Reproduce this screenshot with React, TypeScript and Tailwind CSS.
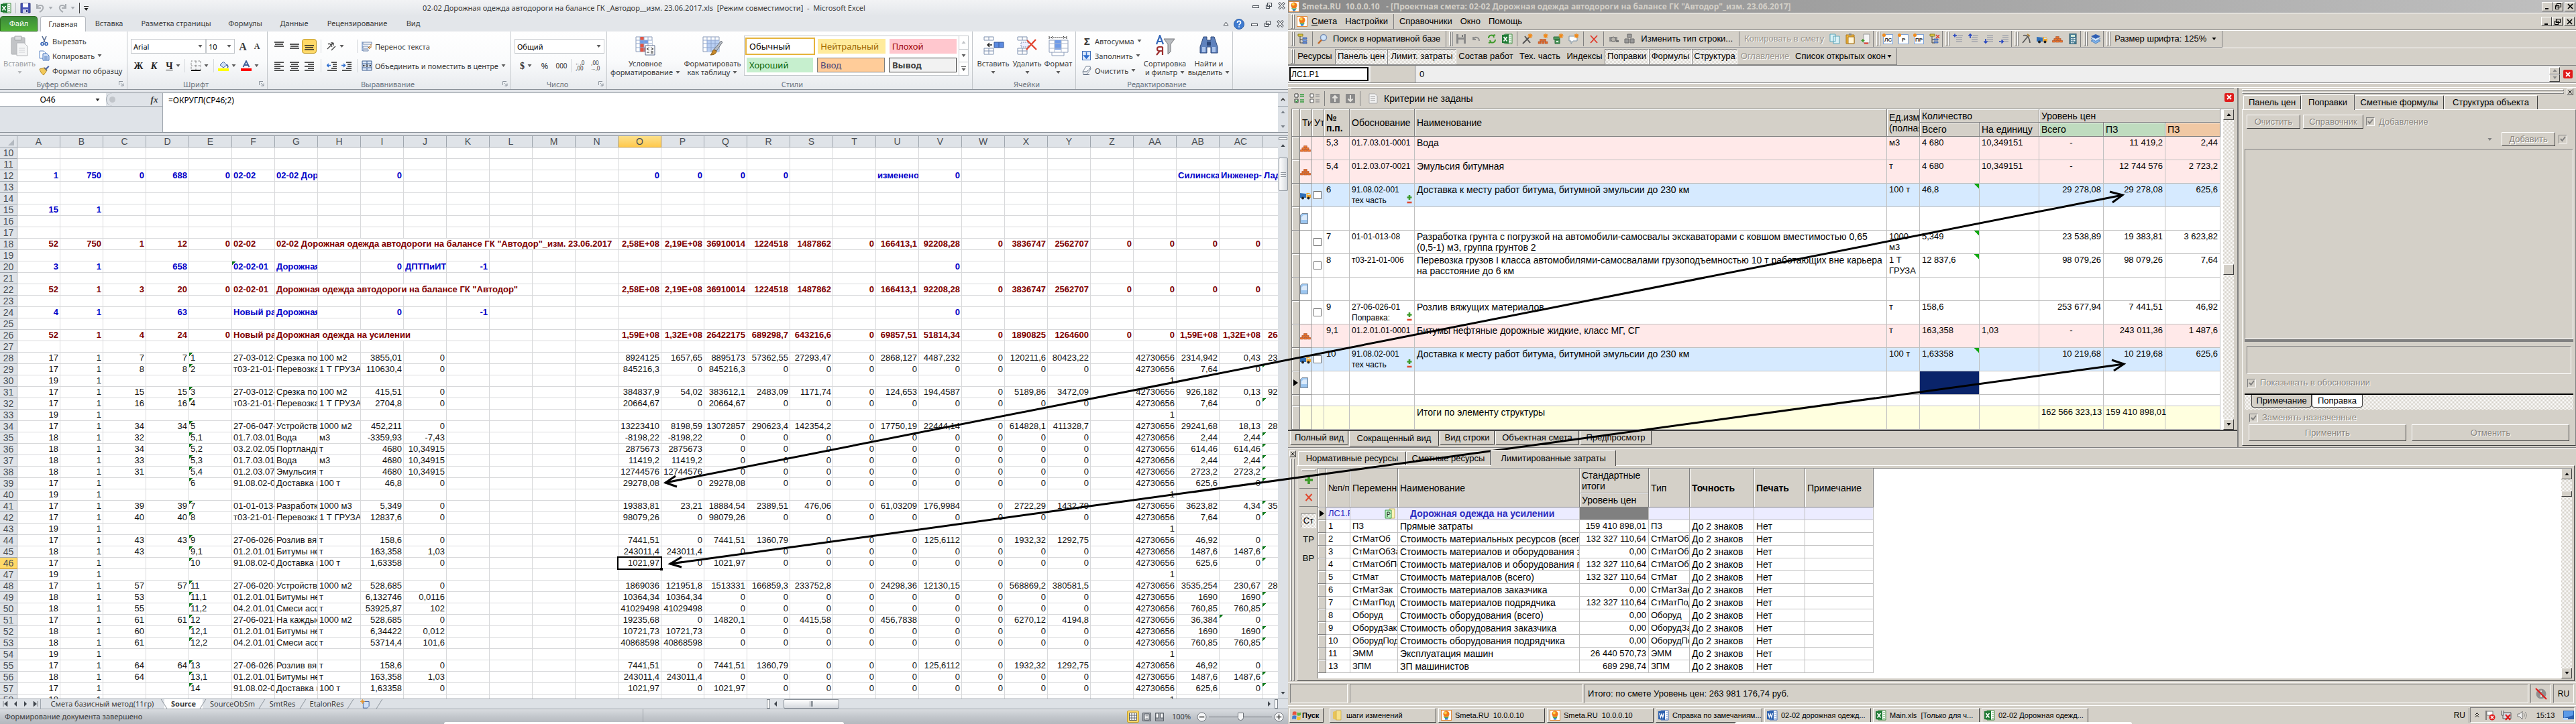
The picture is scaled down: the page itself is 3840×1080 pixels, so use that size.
import React from "react";

type Kids = { children?: React.ReactNode };

/* ---------- shared bits ---------- */

const RAISED = "border border-t-white border-l-white border-r-[#404040] border-b-[#404040] bg-[#d4d0c8]";
const SUNKEN = "border border-t-[#808080] border-l-[#808080] border-r-white border-b-white";
const DITHER = "bg-[repeating-conic-gradient(#ffffff_0_25%,#d4d0c8_0_50%)] bg-[length:2px_2px]";

function Ico({ s = 16, vb = 16, children }: Kids & { s?: number; vb?: number }) {
  return (
    <svg width={s} height={s} viewBox={`0 0 ${vb} ${vb}`} className="shrink-0" aria-hidden="true">
      {children}
    </svg>
  );
}

function Down({ c = "#5b5b5b" }: { c?: string }) {
  return (
    <svg width="7" height="4" viewBox="0 0 7 4" className="shrink-0" aria-hidden="true">
      <path d="M0.5 0h6l-3 4z" fill={c} />
    </svg>
  );
}

function Up({ c = "#5b5b5b" }: { c?: string }) {
  return (
    <svg width="7" height="4" viewBox="0 0 7 4" className="shrink-0" aria-hidden="true">
      <path d="M0.5 4h6l-3-4z" fill={c} />
    </svg>
  );
}

function ExcelLogo() {
  return (
    <Ico>
      <path d="M4 1h11v14H4z" fill="#fff" stroke="#3c8a3c" />
      <path d="M11 4h3M11 7h3M11 10h3M11 13h3" stroke="#5aa65a" />
      <path d="M0 2l10-1v14L0 14z" fill="#1f7a34" />
      <path d="M2.5 5l5 6.5M7.5 5l-5 6.5" stroke="#fff" strokeWidth="1.7" />
    </Ico>
  );
}

function WordLogo() {
  return (
    <Ico>
      <path d="M4 1h11v14H4z" fill="#fff" stroke="#4a73b8" />
      <path d="M11 4h3M11 7h3M11 10h3M11 13h3" stroke="#6b93cf" />
      <path d="M0 2l10-1v14L0 14z" fill="#2a5fae" />
      <path d="M1.8 5l1.6 6 1.7-5 1.7 5 1.5-6" stroke="#fff" strokeWidth="1.3" fill="none" />
    </Ico>
  );
}

function SmetaLogo() {
  return (
    <Ico>
      <rect x="0.5" y="0.5" width="15" height="15" fill="#fff" stroke="#e08a3a" />
      <circle cx="8" cy="6" r="4.6" fill="#f07a1a" />
      <circle cx="6.8" cy="4.6" r="2" fill="#ffd34a" />
      <path d="M3 8.5c2 2.4 6 3 9 1l-1.5 3.2H6z" fill="#4aa44a" />
      <rect x="6" y="12" width="4" height="2.6" fill="#3b82d0" />
    </Ico>
  );
}

/* ---------- Excel: ribbon ---------- */

function Group({ w, label, launcher, children }: Kids & { w: string; label: string; launcher?: boolean }) {
  return (
    <section className={`${w} flex shrink-0 flex-col border-r border-[#c3c7cb]`}>
      <div className="flex flex-1">{children}</div>
      <div className="flex h-4 items-center text-[#6a7480]">
        <span className="flex-1 pl-2 text-center">{label}</span>
        {launcher ? (
          <button className="mr-1 p-0" aria-label={label}>
            <Ico s={8} vb={8}>
              <path d="M0.5 6V.5H6M3 3l3.5 3.5M7 3.5V7H3.5" stroke="#8b939c" fill="none" />
            </Ico>
          </button>
        ) : null}
      </div>
    </section>
  );
}

function Small({ icon, children, arrow }: Kids & { icon: React.ReactNode; arrow?: boolean }) {
  return (
    <button className="flex h-[22px] items-center gap-1 whitespace-nowrap text-left">
      {icon}
      <span>{children}</span>
      {arrow ? <Down /> : null}
    </button>
  );
}

function Big({ w, icon, l1, l2, dim }: { w: string; icon: React.ReactNode; l1: string; l2?: string; dim?: boolean }) {
  return (
    <button className={`${w} ${dim ? "text-[#9a9da1]" : ""} flex shrink-0 flex-col items-center pt-[5px] leading-[13px]`}>
      {icon}
      <span className="mt-1 whitespace-nowrap">{l1}</span>
      <span className="flex h-[13px] items-center gap-1 whitespace-nowrap">
        {l2}
        <Down c={dim ? "#b5b7ba" : "#5b5b5b"} />
      </span>
    </button>
  );
}

function Sep() {
  return <i className="h-5 w-px shrink-0 bg-[#d5d8dc]" />;
}

function Lines({ d }: { d: string }) {
  return (
    <Ico>
      <path d={d} stroke="#222" strokeWidth="1.3" />
    </Ico>
  );
}

function IB({ w, children, on, label }: Kids & { w: string; on?: boolean; label: string }) {
  return (
    <button
      aria-label={label}
      className={`${w} ${on ? "rounded-sm border border-[#c29b29] bg-[#ffd968]" : ""} flex h-[22px] shrink-0 items-center justify-center gap-1`}
    >
      {children}
    </button>
  );
}

function Combo({ w, value, label }: { w: string; value: string; label: string }) {
  return (
    <span className={`${w} relative flex h-[22px] shrink-0 items-center border border-[#c4c8cc] bg-white`}>
      <select aria-label={label} className="h-full w-full appearance-none bg-transparent pl-[3px] text-[11px] text-black">
        <option>{value}</option>
      </select>
      <span className="pointer-events-none absolute right-1">
        <Down />
      </span>
    </span>
  );
}

function TableIcon({ brush, red }: { brush?: boolean; red?: boolean }) {
  return (
    <Ico s={32} vb={32}>
      <path d="M2 3h24v22H2z" fill="#fff" stroke="#8a9bb8" />
      <path d="M8 8h18v17H8z" fill={red ? "#fff" : "#b9cff3"} />
      {red ? <path d="M8 3h6v5H8zM8 19h9v6H8z" fill="#e8543f" /> : null}
      {red ? <path d="M8 8h12v5H8z" fill="#6f9be8" /> : null}
      {red ? <path d="M8 13h6v6H8z" fill="#e8543f" /> : null}
      <path d="M8 3v22M14 3v22M20 3v22M2 8h24M2 13h24M2 19h24" stroke="#8fa6cf" fill="none" />
      {brush ? (
        <>
          <path d="M29 9l2 2-9 13-4-2z" fill="#b7bcc4" stroke="#6b7077" />
          <path d="M18 22l4 2c0 4-4 6-9 6 3-2 2-6 5-8z" fill="#c98a2b" stroke="#7a5212" />
        </>
      ) : (
        <>
          <path d="M16 16h14v14H16z" fill="#fff" stroke="#5b6b8a" />
          <path d="M22 19l-4 2 4 2M18 26h4M24 19l4 2-4 2M24 25h4M24 27h4" stroke="#222" fill="none" />
        </>
      )}
    </Ico>
  );
}

function CellsIcon({ kind }: { kind: "ins" | "del" | "fmt" }) {
  if (kind === "fmt")
    return (
      <Ico s={32} vb={32}>
        <path d="M2 2v4M2 4h26M28 2v4M7 2l-2 2 2 2M23 2l2 2-2 2" stroke="#333" fill="none" strokeDasharray="2 1" />
        <path d="M2 8h28v18H2zM6 26v5h18v-5" fill="#fff" stroke="#8a9bb8" />
        <path d="M10 8h10v14H10z" fill="#6f9be8" />
        <path d="M10 8v18M20 8v18M2 13h28M2 20h28" stroke="#a9b6cc" fill="none" />
      </Ico>
    );
  return (
    <Ico s={32} vb={32}>
      <path d="M2 3h14v5H2zM2 20h14v9H2zM9 3v5M9 20v9M2 24h14" fill="#fff" stroke="#7d8fae" />
      {kind === "ins" ? (
        <>
          <path d="M17 11h14v8H17z" fill="#5b8ae0" stroke="#34599c" />
          <path d="M24 11v8" stroke="#34599c" />
          <path d="M14 15H8M10 12l-3 3 3 3" stroke="#222" fill="none" strokeWidth="1.4" />
        </>
      ) : (
        <>
          <path d="M7 11h11v7H7z" fill="#eef" stroke="#7d8fae" strokeDasharray="2 1" />
          <path d="M16 8l14 14M29 7L15 22" stroke="#e2442f" strokeWidth="2.4" />
        </>
      )}
    </Ico>
  );
}

function StyleItem({ cls, children }: Kids & { cls: string }) {
  return <button className={`${cls} flex h-[22px] flex-1 items-center overflow-hidden pl-1 text-[13px]`}>{children}</button>;
}

function Ribbon() {
  return (
    <div className="flex h-[87px] shrink-0 overflow-hidden border-b border-[#8a9199] bg-linear-to-b from-white via-[#fafbfc] to-[#e7eaee] text-[11px] leading-[13px] text-[#3b3b3b]">
      <Group w="w-[190px]" label="Буфер обмена" launcher>
        <Big
          w="w-[58px]"
          dim
          l1="Вставить"
          icon={
            <Ico s={32} vb={32}>
              <rect x="4" y="4" width="20" height="25" rx="1" fill="#c2c4c7" stroke="#aeb0b3" />
              <path d="M9 2h10v6H9z" fill="#dcdde0" stroke="#a5a7aa" />
              <path d="M12 12h11l5 5v14H12z" fill="#f4f5f6" stroke="#b5b7ba" />
              <path d="M15 20h9M15 23h9M15 26h9" stroke="#d0d2d5" />
            </Ico>
          }
        />
        <div className="flex flex-col pt-[3px]">
          <Small
            icon={
              <Ico>
                <path d="M5 1l4 9M11 1L7 10" stroke="#5a6f94" strokeWidth="1.6" />
                <circle cx="5" cy="12.5" r="2" fill="none" stroke="#2f5fb3" strokeWidth="1.5" />
                <circle cx="11" cy="12.5" r="2" fill="none" stroke="#2f5fb3" strokeWidth="1.5" />
              </Ico>
            }
          >
            Вырезать
          </Small>
          <Small
            arrow
            icon={
              <Ico>
                <path d="M1 1h6l3 3v8H1z" fill="#fff" stroke="#5b84c4" />
                <path d="M6 5h6l3 3v7H6z" fill="#dbe8fb" stroke="#3f6fb8" />
                <path d="M8 9h5M8 11h5M8 13h5" stroke="#3f6fb8" />
              </Ico>
            }
          >
            Копировать
          </Small>
          <Small
            icon={
              <Ico>
                <path d="M10 5l4-4 1.5 1.5-4 4z" fill="#4a64a8" />
                <path d="M1 6l7-2 4 4-5 7C4 13 2 10 1 6z" fill="#f2c95a" stroke="#b78a26" />
                <path d="M8 4l4 4" stroke="#6b7077" strokeWidth="2" />
              </Ico>
            }
          >
            Формат по образцу
          </Small>
        </div>
      </Group>

      <Group w="w-[209px]" label="Шрифт" launcher>
        <div className="flex flex-col gap-[7px] pt-[11px] pl-[5px]">
          <div className="flex items-center">
            <Combo w="w-[112px]" value="Arial" label="Шрифт" />
            <Combo w="w-[43px]" value="10" label="Размер" />
            <IB w="w-[24px]" label="Увеличить размер">
              <b className="font-['Liberation_Serif'] text-[16px]">A</b>
            </IB>
            <IB w="w-[18px]" label="Уменьшить размер">
              <b className="font-['Liberation_Serif'] text-[12px]">A</b>
            </IB>
          </div>
          <div className="flex items-center font-['Liberation_Serif'] text-[14px] font-bold text-[#222]">
            <IB w="w-[23px]" label="Полужирный">Ж</IB>
            <IB w="w-[23px]" label="Курсив"><em>К</em></IB>
            <IB w="w-[34px]" label="Подчеркнутый"><u>Ч</u><Down /></IB>
            <Sep />
            <IB w="w-[42px]" label="Границы">
              <Ico>
                <path d="M1 1h14v14H1zM8 1v14M1 8h14" stroke="#777" strokeDasharray="1 1" fill="none" />
                <path d="M1 15h14" stroke="#111" strokeWidth="2" />
              </Ico>
              <Down />
            </IB>
            <Sep />
            <IB w="w-[38px]" label="Цвет заливки">
              <Ico>
                <path d="M3 7l5-5 5 5-5 4z" fill="#cfe0f8" stroke="#3f5f9a" />
                <path d="M13 6c2 2 2 4 1 5" stroke="#3f5f9a" fill="none" strokeWidth="1.6" />
                <path d="M0 12h16v4H0z" fill="#ffff00" />
              </Ico>
              <Down />
            </IB>
            <IB w="w-[30px]" label="Цвет текста">
              <Ico>
                <path d="M3.5 10L8 1l4.5 9M5 7h6" stroke="#3f5f9a" strokeWidth="1.8" fill="none" />
                <path d="M0 12h16v4H0z" fill="#ff0000" />
              </Ico>
              <Down />
            </IB>
          </div>
        </div>
      </Group>

      <Group w="w-[363px]" label="Выравнивание" launcher>
        <div className="flex flex-col gap-[7px] pt-[11px] pl-[5px]">
          <div className="flex items-center">
            <IB w="w-[23px]" label="По верхнему краю"><Lines d="M1 2h14M2 5h12M1 8h14" /></IB>
            <IB w="w-[23px]" label="По середине"><Lines d="M1 5h14M2 8h12M1 11h14" /></IB>
            <IB w="w-[22px]" on label="По нижнему краю"><Lines d="M1 7h14M2 10h12M1 13h14" /></IB>
            <span className="w-[6px]" />
            <Sep />
            <IB w="w-[40px]" label="Ориентация">
              <Ico>
                <path d="M2 12L11 3M11 3v4M11 3H7M3 5c2-2 4 0 6 4M8 14l6-6" stroke="#444" fill="none" strokeWidth="1.3" />
              </Ico>
              <Down />
            </IB>
            <span className="w-[13px]" />
            <Sep />
            <span className="w-[6px]" />
            <Small
              icon={
                <Ico>
                  <path d="M1 1v14" stroke="#3f6fb8" />
                  <path d="M2 2h13v3H2zM2 8h8v3H2zM2 13h8v2H2z" fill="#fff" stroke="#6b83ab" />
                  <path d="M14 5v5h-3M12 8l-2 2 2 2" stroke="#b06a1a" fill="none" />
                </Ico>
              }
            >
              Перенос текста
            </Small>
          </div>
          <div className="flex items-center">
            <IB w="w-[23px]" label="По левому краю"><Lines d="M1 3h14M1 6h9M1 9h14M1 12h9M1 15h14" /></IB>
            <IB w="w-[23px]" label="По центру"><Lines d="M1 3h14M3 6h10M1 9h14M3 12h10M1 15h14" /></IB>
            <IB w="w-[22px]" label="По правому краю"><Lines d="M1 3h14M6 6h9M1 9h14M6 12h9M1 15h14" /></IB>
            <span className="w-[6px]" />
            <Sep />
            <span className="w-[5px]" />
            <IB w="w-[22px]" label="Уменьшить отступ">
              <Ico>
                <path d="M7 3h8M9 6h6M9 9h6M7 12h8M1 15h14" stroke="#222" strokeWidth="1.3" />
                <path d="M6 7.5H1M3 5L0.5 7.5 3 10" stroke="#2f6fd0" fill="none" strokeWidth="1.5" />
              </Ico>
            </IB>
            <IB w="w-[22px]" label="Увеличить отступ">
              <Ico>
                <path d="M7 3h8M9 6h6M9 9h6M7 12h8M1 15h14" stroke="#222" strokeWidth="1.3" />
                <path d="M0 7.5h5M3 5l2.5 2.5L3 10" stroke="#2f6fd0" fill="none" strokeWidth="1.5" />
              </Ico>
            </IB>
            <span className="w-[4px]" />
            <Sep />
            <span className="w-[6px]" />
            <Small
              arrow
              icon={
                <Ico>
                  <path d="M1 1h14v14H1zM8 1v4M8 11v4M1 5h14M1 11h14" fill="#dbe8fb" stroke="#3f5f8f" />
                  <path d="M5 8H2M11 8h3M3.5 6.5L2 8l1.5 1.5M12.5 6.5L14 8l-1.5 1.5" stroke="#222" fill="none" />
                  <circle cx="8" cy="8" r="1.4" fill="none" stroke="#222" />
                </Ico>
              }
            >
              Объединить и поместить в центре
            </Small>
          </div>
        </div>
      </Group>

      <Group w="w-[143px]" label="Число" launcher>
        <div className="flex flex-col gap-[7px] pt-[11px] pl-[5px]">
          <Combo w="w-[134px]" value="Общий" label="Формат числа" />
          <div className="flex items-center text-[#333]">
            <IB w="w-[34px]" label="Финансовый"><b className="font-['Liberation_Serif'] text-[14px]">$</b><Down /></IB>
            <IB w="w-[22px]" label="Процентный"><span className="text-[13px]">%</span></IB>
            <IB w="w-[28px]" label="Формат с разделителями"><span className="text-[10px]">000</span></IB>
            <Sep />
            <IB w="w-[24px]" label="Увеличить разрядность">
              <span className="text-[8px] leading-[8px]">←,0<br />,00</span>
            </IB>
            <IB w="w-[22px]" label="Уменьшить разрядность">
              <span className="text-[8px] leading-[8px]">,00<br />→,0</span>
            </IB>
          </div>
        </div>
      </Group>

      <Group w="w-[545px]" label="Стили">
        <Big w="w-[114px]" icon={<TableIcon red />} l1="Условное" l2="форматирование" />
        <Big w="w-[86px]" icon={<TableIcon brush />} l1="Форматировать" l2="как таблицу" />
        <div className="mt-[6px] ml-1 flex h-[60px] w-[335px] border border-[#c4c8cc] bg-white">
          <div className="flex flex-1 flex-col justify-between px-[3px] pt-1 pb-1">
            <div className="flex gap-[6px]">
              <StyleItem cls="bg-white text-black outline-2 outline-[#e5b33b]">Обычный</StyleItem>
              <StyleItem cls="bg-[#ffeb9c] text-[#9c6500]">Нейтральный</StyleItem>
              <StyleItem cls="bg-[#ffc7ce] text-[#9c0006]">Плохой</StyleItem>
            </div>
            <div className="flex gap-[6px]">
              <StyleItem cls="bg-[#c6efce] text-[#006100]">Хороший</StyleItem>
              <StyleItem cls="border border-[#7f7f7f] bg-[#ffcc99] text-[#3f3f76]">Ввод</StyleItem>
              <StyleItem cls="border border-[#3f3f3f] bg-[#f2f2f2] font-bold text-[#3f3f3f]">Вывод</StyleItem>
            </div>
          </div>
          <div className="flex w-[14px] flex-col divide-y divide-[#c4c8cc] border-l border-[#c4c8cc]">
            <button aria-label="Вверх" className="flex flex-1 items-center justify-center"><Up c="#c0c3c6" /></button>
            <button aria-label="Вниз" className="flex flex-1 items-center justify-center"><Down /></button>
            <button aria-label="Дополнительно" className="flex flex-1 flex-col items-center justify-center gap-0.5">
              <i className="h-px w-[7px] bg-[#5b5b5b]" />
              <Down />
            </button>
          </div>
        </div>
      </Group>

      <Group w="w-[154px]" label="Ячейки">
        <span className="w-1" />
        <Big w="w-[53px]" icon={<CellsIcon kind="ins" />} l1="Вставить" />
        <Big w="w-[48px]" icon={<CellsIcon kind="del" />} l1="Удалить" />
        <Big w="w-[45px]" icon={<CellsIcon kind="fmt" />} l1="Формат" />
      </Group>

      <Group w="w-[234px]" label="Редактирование">
        <div className="flex w-[98px] flex-col pt-[3px] pl-2">
          <Small arrow icon={<b className="w-4 pl-1 text-[15px]">Σ</b>}>Автосумма</Small>
          <Small
            arrow
            icon={
              <Ico>
                <rect x="1.5" y="1.5" width="12" height="13" fill="#dbe8fb" stroke="#3f6fb8" />
                <path d="M7.5 3v7M4 8l3.5 4L11 8z" stroke="#2f6fd0" fill="#2f6fd0" strokeWidth="1.5" />
              </Ico>
            }
          >
            Заполнить
          </Small>
          <Small
            arrow
            icon={
              <Ico>
                <path d="M7 2h6l1 4-6 8H3l-1-4z" fill="#f5f7fa" stroke="#7b8797" />
                <path d="M2 10h6l6-6M3 14.5h9" stroke="#4c5a70" fill="none" />
              </Ico>
            }
          >
            Очистить
          </Small>
        </div>
        <Big
          w="w-[69px]"
          l1="Сортировка"
          l2="и фильтр"
          icon={
            <Ico s={32} vb={32}>
              <path d="M3 14L8 1l5 13M5 10h6" stroke="#3567b8" strokeWidth="2.2" fill="none" />
              <path d="M12 18v12M12 18H7c-4 0-4 6 0 6h5M8 24l-5 6" stroke="#9c2f2f" strokeWidth="2.2" fill="none" />
              <path d="M14 6h16l-6 8v11l-4 4V14z" fill="#b9bcc0" stroke="#77797c" />
            </Ico>
          }
        />
        <Big
          w="w-[62px]"
          l1="Найти и"
          l2="выделить"
          icon={
            <Ico s={32} vb={32}>
              <path d="M8 3h5v5h6V3h5l5 15v9h-10v-9h-6v9H3v-9z" fill="#5f82bd" stroke="#2c4778" />
              <path d="M6 18h5v8H6zM21 18h5v8h-5z" fill="#a9c2ea" />
              <path d="M13 10h6v6h-6z" fill="#2c4778" />
            </Ico>
          }
        />
      </Group>
    </div>
  );
}

/* ---------- Excel: sheet ---------- */

const LETTERS = "A B C D E F G H I J K L M N O P Q R S T U V W X Y Z AA AB AC".split(" ");
const ZERO = "0|0|0|0|0|0|0|0|0|";

/* "^" marks a cell with the green error corner, "~n~" a text that runs over n columns,
   "<" a number whose right part lies beyond the window's edge */
const SHEET: Record<number, string> = {
  12: "1|750|0|688|0|02-02|02-02 Дорожная||0||||||0|0|0|0|||изменено|0||||||Силинская|Инженер-|Лад",
  15: "15|1",
  18: '52|750|1|12|0|02-02|~8~02-02 Дорожная одежда автодороги на балансе ГК "Автодор"_изм. 23.06.2017|2,58E+08|2,19E+08|36910014|1224518|1487862|0|166413,1|92208,28|0|3836747|2562707|0|0|0|0',
  20: "3|1||658||^02-02-01|Дорожная||0|ДПТПиИТ|-1|||||||||||0",
  22: '52|1|3|20|0|02-02-01|~6~Дорожная одежда автодороги на балансе ГК "Автодор"|||2,58E+08|2,19E+08|36910014|1224518|1487862|0|166413,1|92208,28|0|3836747|2562707|0|0|0|0',
  24: "4|1||63||Новый раздел|Дорожная||0||-1|||||||||||0",
  26: "52|1|4|24|0|Новый раздел|~4~Дорожная одежда на усилении|||||1,59E+08|1,32E+08|26422175|689298,7|643216,6|0|69857,51|51814,34|0|1890825|1264600|0|0|1,59E+08|1,32E+08|<264",
  28: "17|1|7|7|^1|27-03-012-|Срезка по|100 м2|3855,01|0|||||8924125|1657,65|8895173|57362,55|27293,47|0|2868,127|4487,232|0|120211,6|80423,22||42730656|2314,942|0,43|<23",
  29: "17|1|8|8|^2|т03-21-01-0|Перевозка|1 Т ГРУЗА|110630,4|0|||||845216,3|0|845216,3|0|0|0|0|0|0|0|0||42730656|7,64|0|^",
  30: "19|1|||||||||||||||||||||||||1",
  31: "17|1|15|15|^3|27-03-012-|Срезка по|100 м2|415,51|0|||||384837,9|54,02|383612,1|2483,09|1171,74|0|124,653|194,4587|0|5189,86|3472,09||42730656|926,182|0,13|<92",
  32: "17|1|16|16|^4|т03-21-01-0|Перевозка|1 Т ГРУЗА|2704,8|0|||||20664,67|0|20664,67|0|0|0|0|0|0|0|0||42730656|7,64|0|^",
  33: "19|1|||||||||||||||||||||||||1",
  34: "17|1|34|34|^5|27-06-047-|Устройств|1000 м2|452,211|0|||||13223410|8198,59|13072857|290623,4|142354,2|0|17750,19|22444,14|0|614828,1|411328,7||42730656|29241,68|18,13|<289",
  35: `18|1|32||^5,1|01.7.03.01|Вода|м3|-3359,93|-7,43|||||-8198,22|-8198,22|${ZERO}|42730656|2,44|2,44|^`,
  36: `18|1|34||^5,2|03.2.02.05|Портландц|т|4680|10,34915|||||2875673|2875673|${ZERO}|42730656|614,46|614,46|^`,
  37: `18|1|33||^5,3|01.7.03.01|Вода|м3|4680|10,34915|||||11419,2|11419,2|${ZERO}|42730656|2,44|2,44|^`,
  38: `18|1|31||^5,4|01.2.03.07|Эмульсия|т|4680|10,34915|||||12744576|12744576|${ZERO}|42730656|2723,2|2723,2|^`,
  39: "17|1|||^6|91.08.02-0|Доставка к|100 т|46,8|0|||||29278,08|0|29278,08|0|0|0|0|0|0|0|0||42730656|625,6|0|^",
  40: "19|1|||||||||||||||||||||||||1",
  41: "17|1|39|39|^7|01-01-013-|Разработк|1000 м3|5,349|0|||||19383,81|23,21|18884,54|2389,51|476,06|0|61,03209|176,9984|0|2722,29|1432,79||42730656|3623,82|4,34|^<35",
  42: "17|1|40|40|^8|т03-21-01-0|Перевозка|1 Т ГРУЗА|12837,6|0|||||98079,26|0|98079,26|0|0|0|0|0|0|0|0||42730656|7,64|0|^",
  43: "19|1|||||||||||||||||||||||||1",
  44: "17|1|43|43|^9|27-06-026-|Розлив вя|т|158,6|0|||||7441,51|0|7441,51|1360,79|0|0|0|125,6112|0|1932,32|1292,75||42730656|46,92|0|",
  45: `18|1|43||^9,1|01.2.01.01|Битумы не|т|163,358|1,03|||||243011,4|243011,4|${ZERO}|42730656|1487,6|1487,6|^`,
  46: "17|1|||^10|91.08.02-0|Доставка к|100 т|1,63358|0|||||1021,97|0|1021,97|0|0|0|0|0|0|0|0||42730656|625,6|0|^",
  47: "19|1|||||||||||||||||||||||||1",
  48: "17|1|57|57|^11|27-06-020-|Устройств|1000 м2|528,685|0|||||1869036|121951,8|1513331|166859,3|233752,8|0|24298,36|12130,15|0|568869,2|380581,5||42730656|3535,254|230,67|<280",
  49: `18|1|53||^11,1|01.2.01.01|Битумы не|т|6,132746|0,0116|||||10364,34|10364,34|${ZERO}|42730656|1690|1690|^`,
  50: `18|1|55||^11,2|04.2.01.01|Смеси асф|т|53925,87|102|||||41029498|41029498|${ZERO}|42730656|760,85|760,85|^`,
  51: "17|1|61|61|^12|27-06-021-|На каждые|1000 м2|528,685|0|||||19235,68|0|14820,1|0|4415,58|0|456,7838|0|0|6270,12|4194,8||42730656|36,384|^0|",
  52: `18|1|60||^12,1|01.2.01.01|Битумы не|т|6,34422|0,012|||||10721,73|10721,73|${ZERO}|42730656|1690|1690|^`,
  53: `18|1|61||^12,2|04.2.01.01|Смеси асф|т|53714,4|101,6|||||40868598|40868598|${ZERO}|42730656|760,85|760,85|^`,
  54: "19|1|||||||||||||||||||||||||1",
  55: "17|1|64|64|^13|27-06-026-|Розлив вя|т|158,6|0|||||7441,51|0|7441,51|1360,79|0|0|0|125,6112|0|1932,32|1292,75||42730656|46,92|0|",
  56: `18|1|64||^13,1|01.2.01.01|Битумы не|т|163,358|1,03|||||243011,4|243011,4|${ZERO}|42730656|1487,6|1487,6|^`,
  57: "17|1|||^14|91.08.02-0|Доставка к|100 т|1,63358|0|||||1021,97|0|1021,97|0|0|0|0|0|0|0|0||42730656|625,6|0|^",
  58: "18|1|||||||||||||||||||||||||1",
};

const BLUE = [12, 15, 20, 24];
const RED = [18, 22, 26];
const ROWS = Array.from({ length: 49 }, (_, i) => i + 10);

function SheetRow({ n }: { n: number }) {
  const raw = (SHEET[n] ?? "").split("|");
  const tone = BLUE.includes(n) ? "font-bold text-[#0000c8]" : RED.includes(n) ? "font-bold text-[#800000]" : "text-[#111]";
  const cells: React.ReactNode[] = [];
  let col = 0;
  for (let k = 0; col < 30; k++) {
    let text = raw[k] ?? "";
    let span = 1;
    const run = text.match(/^~(\d)~(.*)$/);
    if (run) {
      span = Number(run[1]);
      text = run[2];
    }
    const flag = text.startsWith("^");
    if (flag) text = text.slice(1);
    const cut = text.startsWith("<");
    if (cut) text = text.slice(1);
    const isText = !/^-?[\d,]+(E\+08)?$/.test(text) || cut || (flag && col === 4);
    const active = n === 46 && col === 14;
    cells.push(
      <td
        key={col}
        colSpan={span}
        className={`${isText ? "text-left" : "text-right"} ${cut ? "pl-[8px]" : "px-[2px]"} ${
          flag ? "bg-[linear-gradient(135deg,#0a7a1a_4px,transparent_4px)]" : ""
        } ${active ? "relative overflow-visible" : "overflow-hidden"} h-[17px] border-r border-b border-[#d8d9db] py-0 whitespace-nowrap`}
      >
        {text}
        {active ? (
          <>
            <i className="pointer-events-none absolute -inset-[2px] border-2 border-black" />
            <i className="absolute -right-[3px] -bottom-[3px] h-1 w-1 bg-black" />
          </>
        ) : null}
      </td>,
    );
    col += span;
  }
  return (
    <tr className={tone}>
      <th
        className={`${n === 46 ? "border-[#c2902c] bg-[#ffd968]" : "border-[#9fa6ae] bg-[#dfe3e8]"} h-[17px] border-r border-b p-0 text-center text-[14px] font-normal text-[#4a4f55]`}
      >
        {n}
      </th>
      {cells}
    </tr>
  );
}

function Sheet() {
  return (
    <div className="flex min-h-0 flex-1 border-t border-[#8a9199]">
      <div className="min-w-0 flex-1 overflow-hidden bg-white">
        <table className="w-[1946px] table-fixed border-separate border-spacing-0 font-['Liberation_Sans',sans-serif] text-[13px] leading-[16px]">
          <colgroup>
            <col className="w-[26px]" />
            {ROWS.slice(0, 30).map((r) => (
              <col key={r} className="w-[64px]" />
            ))}
          </colgroup>
          <thead>
            <tr className="text-[14px] text-[#4a4f55]">
              <th className="h-4 border-r border-b border-[#9fa6ae] bg-[#dfe3e8] p-0">
                <svg width="24" height="14" viewBox="0 0 24 14" aria-hidden="true">
                  <path d="M21 4v9H12z" fill="#b3b9c0" />
                </svg>
              </th>
              {[...LETTERS, ""].map((l, i) => (
                <th
                  key={i}
                  className={`${
                    l === "O" ? "border-[#c2902c] bg-linear-to-b from-[#fbe08a] to-[#ffc94a]" : "border-[#9fa6ae] bg-[#dfe3e8]"
                  } h-4 border-r border-b p-0 text-center font-normal`}
                >
                  {l}
                </th>
              ))}
            </tr>
          </thead>
          <tbody>
            {ROWS.map((n) => (
              <SheetRow key={n} n={n} />
            ))}
          </tbody>
        </table>
      </div>
      <div className="flex w-[15px] shrink-0 flex-col items-center bg-[#dde1e6]">
        <i className="mt-0.5 h-1 w-[13px] border border-[#7c838b] bg-white" />
        <span className="flex h-4 items-center"><Up c="#3f454c" /></span>
        <span className="mt-[10px] flex h-[50px] w-[14px] flex-col items-center justify-center gap-0.5 rounded-xs border border-[#8b929a] bg-linear-to-r from-white to-[#d5d9de]">
          <i className="h-px w-2 bg-[#8b929a]" />
          <i className="h-px w-2 bg-[#8b929a]" />
          <i className="h-px w-2 bg-[#8b929a]" />
        </span>
        <span className="flex-1" />
        <span className="flex h-4 items-center"><Down c="#3f454c" /></span>
      </div>
    </div>
  );
}

function Slash({ back }: { back?: boolean }) {
  return <i className={`${back ? "skew-x-[32deg]" : "-skew-x-[32deg]"} h-full w-px shrink-0 bg-[#8b929a]`} />;
}

function WinBtns({ boxed }: { boxed?: boolean }) {
  const b = boxed ? `${RAISED} h-[14px] w-4` : "h-4 w-4";
  return (
    <div className={`flex items-center ${boxed ? "" : "gap-[3px]"}`}>
      <button aria-label="Свернуть" className={`${b} flex items-center justify-center`}>
        <Ico s={11} vb={11}>
          {boxed ? <path d="M2 9h5" stroke="#000" strokeWidth="2" /> : <rect x="0.5" y="5.5" width="9" height="3" fill="#fff" stroke="#4c525a" />}
        </Ico>
      </button>
      <button aria-label="Восстановить" className={`${b} flex items-center justify-center`}>
        <Ico s={11} vb={11}>
          <path d="M3.5 1.5h6v5h-6zM1.5 4.5h5v5h-5z" fill={boxed ? "#d4d0c8" : "#fff"} stroke={boxed ? "#000" : "#4c525a"} strokeWidth="1.2" />
        </Ico>
      </button>
      <button aria-label="Закрыть" className={`${b} ${boxed ? "ml-0.5" : ""} flex items-center justify-center`}>
        <Ico s={11} vb={11}>
          {boxed ? (
            <path d="M2 2l7 7M9 2L2 9" stroke="#000" strokeWidth="1.7" />
          ) : (
            <>
              <path d="M1.5 1l8 9M9.5 1l-8 9" stroke="#4c525a" strokeWidth="3.4" />
              <path d="M2 1.5l7 8M9 1.5l-7 8" stroke="#fff" strokeWidth="1.4" />
            </>
          )}
        </Ico>
      </button>
    </div>
  );
}

function Excel() {
  const tabs = [
    ["Вставка", "w-[69px]"],
    ["Разметка страницы", "w-[131px]"],
    ["Формулы", "w-[75px]"],
    ["Данные", "w-[71px]"],
    ["Рецензирование", "w-[117px]"],
    ["Вид", "w-[50px]"],
  ];
  return (
    <section className="relative flex min-w-0 flex-1 flex-col overflow-hidden bg-[#e3e6ea] font-['Noto_Sans','Open_Sans',sans-serif] text-[11px] text-[#3b3b3b]">
      <header className="relative flex h-6 shrink-0 items-center justify-center bg-linear-to-b from-[#f2f3f5] to-[#e3e6ea]">
        <div className="absolute left-0 flex items-center gap-[6px] pl-px">
          <ExcelLogo />
          <i className="h-4 w-px bg-[#b4b8bd]" />
          <Ico>
            <path d="M1 1h14v14H1z" fill="#4a56b8" stroke="#2b347a" />
            <path d="M4 1h8v6H4z" fill="#fff" />
            <path d="M4 10h8v5H4z" fill="#c9cde8" />
            <path d="M9 11h2v3H9z" fill="#2b347a" />
          </Ico>
          <span className="flex items-center gap-1">
            <Ico>
              <path d="M3 2v6h6M3 8c2-6 11-5 9 1-1 3-3 4-5 5" fill="none" stroke="#a9adb2" strokeWidth="2" />
            </Ico>
            <Down c="#a9adb2" />
          </span>
          <span className="flex items-center gap-1">
            <Ico>
              <path d="M13 2v6H7M13 8C11 2 2 3 4 9c1 3 3 4 5 5" fill="none" stroke="#a9adb2" strokeWidth="2" />
            </Ico>
            <Down c="#a9adb2" />
          </span>
          <i className="h-4 w-px bg-[#444]" />
          <span className="flex flex-col gap-0.5">
            <i className="h-px w-[7px] bg-[#222]" />
            <Down c="#222" />
          </span>
        </div>
        <h1 className="whitespace-pre">
          02-02 Дорожная одежда автодороги на балансе ГК _Автодор__изм. 23.06.2017.xls  [Режим совместимости]  -  Microsoft Excel
        </h1>
        <div className="absolute top-0 right-[2px]">
          <WinBtns />
        </div>
      </header>

      <nav className="flex h-[23px] shrink-0 items-center">
        <button className="h-full w-[56px] rounded-t-sm border border-[#2a6a1f] bg-linear-to-b from-[#3c8a3a] to-[#4fb035] text-white">Файл</button>
        <button className="ml-[4px] h-full w-[68px] rounded-t-sm border border-b-0 border-[#b6bac0] bg-white">Главная</button>
        {tabs.map(([t, w]) => (
          <button key={t} className={`${w} h-full text-center whitespace-nowrap`}>
            {t}
          </button>
        ))}
        <span className="flex-1" />
        <div className="flex items-center gap-[7px] pr-[4px]">
          <Ico s={9} vb={9}>
            <path d="M1 7l3.5-5L8 7z" fill="#fff" stroke="#4c525a" />
          </Ico>
          <svg width="16" height="16" viewBox="0 0 16 16" aria-hidden="true">
            <circle cx="8" cy="8" r="7.5" fill="#3f7bd0" stroke="#2a5ca6" />
            <path d="M5.5 6c0-3.4 5-3.4 5 0 0 1.8-2.5 1.6-2.5 3.8M8 11.2v1.6" stroke="#fff" strokeWidth="1.7" fill="none" />
          </svg>
          <WinBtns />
        </div>
      </nav>

      <Ribbon />

      <div className="mt-1 flex h-[60px] shrink-0 border-y border-[#8a9199] bg-white">
        <div className="flex w-[243px] flex-col border-r border-[#9fa6ae] bg-[#dfe3e8]">
          <div className="flex h-5 items-center border-b border-[#9fa6ae]">
            <input aria-label="Имя" defaultValue="O46" className="h-full w-[142px] bg-white text-center text-[12px] text-black" />
            <span className="flex h-full w-4 items-center bg-white"><Down c="#222" /></span>
            <span className="flex h-full w-[60px] items-center rounded-l-full border-l border-[#9fa6ae] pl-1">
              <i className="h-[9px] w-[9px] rounded-full bg-[#c1c5ca]" />
            </span>
            <em className="flex-1 text-center font-['Liberation_Serif'] text-[13px] font-bold">fx</em>
          </div>
        </div>
        <input
          aria-label="Строка формул"
          defaultValue="=ОКРУГЛ(CP46;2)"
          className="h-5 min-w-0 flex-1 bg-white pl-2 text-[12px] text-black"
        />
        <div className="flex w-[15px] flex-col items-center bg-[#dde1e6]">
          <button aria-label="Свернуть строку формул" className="flex h-5 w-full items-center justify-center border-b border-[#9fa6ae]">
            <Ico s={7} vb={7}><path d="M1 5l2.5-3L6 5" stroke="#333" strokeWidth="1.5" fill="none" /></Ico>
          </button>
          <span className="flex h-4 items-center"><Up c="#7c838b" /></span>
          <span className="flex-1" />
          <span className="flex h-4 items-center"><Down c="#7c838b" /></span>
        </div>
      </div>
      <div className="h-1 shrink-0" />

      <Sheet />

      <div className="flex h-[16px] shrink-0 items-center border-y border-[#9fa6ae] bg-[#dde1e6] leading-[14px]">
        <div className="flex w-[60px] items-center justify-around">
          <Ico s={8} vb={8}><path d="M1 0v8M7 0v8L2.5 4z" stroke="#3f454c" fill="#3f454c" strokeWidth=".6" /></Ico>
          <Ico s={8} vb={8}><path d="M6 0v8L2 4z" fill="#3f454c" /></Ico>
          <Ico s={8} vb={8}><path d="M2 0v8l4-4z" fill="#3f454c" /></Ico>
          <Ico s={8} vb={8}><path d="M7 0v8M1 0v8l4.5-4z" stroke="#3f454c" fill="#3f454c" strokeWidth=".6" /></Ico>
        </div>
        <i className="h-full w-px bg-[#9fa6ae]" />
        <button className="h-full w-[183px] text-center">Смета базисный метод(11гр)</button>
        <Slash back />
        <button className="h-full w-[57px] bg-white text-center font-bold">Source</button>
        <Slash />
        <button className="h-full w-[87px] text-center">SourceObSm</button>
        <Slash />
        <button className="h-full w-[60px] text-center">SmtRes</button>
        <Slash />
        <button className="h-full w-[70px] text-center">EtalonRes</button>
        <Slash />
        <button aria-label="Вставить лист" className="flex h-full w-[42px] items-center justify-center">
          <Ico s={14}>
            <path d="M5 4h10v8l-3 3H5z" fill="#cfe0f8" stroke="#3f5f9a" />
            <path d="M4 0v8M0 4h8M1 1l6 6M7 1L1 7" stroke="#e8952b" />
          </Ico>
        </button>
        <Slash />
        <span className="flex-1" />
        <div className="flex h-full w-[762px] items-center gap-1">
          <i className="h-full w-[5px] border border-[#7c838b] bg-white" />
          <Ico s={8} vb={8}><path d="M6 0v8L2 4z" fill="#3f454c" /></Ico>
          <span className="ml-1 flex h-full w-[83px] items-center justify-center gap-px rounded-xs border border-[#8b929a] bg-linear-to-b from-white to-[#d5d9de]">
            <i className="h-2 w-px bg-[#7c838b]" />
            <i className="h-2 w-px bg-[#7c838b]" />
            <i className="h-2 w-px bg-[#7c838b]" />
          </span>
          <span className="flex-1" />
          <Ico s={8} vb={8}><path d="M2 0v8l4-4z" fill="#3f454c" /></Ico>
          <i className="h-full w-[5px] border border-[#7c838b] bg-white" />
        </div>
        <span className="w-[15px]" />
      </div>

      <footer className="flex h-[22px] shrink-0 items-center bg-linear-to-b from-[#d9dce0] via-[#c3c7cc] to-[#b4b8be] pl-[7px]">
        <span className="w-[951px]">Формирование документа завершено</span>
        <i className="h-full w-px bg-[#9ca1a7]" />
        <span className="flex-1" />
        <div className="flex items-center gap-[3px] pr-[6px]">
          <button aria-label="Обычный" className="flex h-[18px] w-[18px] items-center justify-center rounded-xs border border-[#c29b29] bg-[#ffd968]">
            <Ico s={12} vb={12}><path d="M.5.5h11v11H.5zM4 0v12M8 0v12M0 4h12M0 8h12" fill="#fff" stroke="#5b6068" /></Ico>
          </button>
          <button aria-label="Разметка страницы" className="flex h-[18px] w-4 items-center justify-center">
            <Ico s={13} vb={13}><path d="M.5.5h12v12H.5z" fill="#9ba0a7" stroke="#5b6068" /><path d="M3 2h7v9H3zM4.5 4h4M4.5 6.5h4M4.5 9h4" fill="#fff" stroke="#5b6068" /></Ico>
          </button>
          <button aria-label="Страничный режим" className="flex h-[18px] w-4 items-center justify-center">
            <Ico s={13} vb={13}><path d="M.5.5h12v12H.5z" fill="#9ba0a7" stroke="#5b6068" /><path d="M1 1h4v7H1zM8 1h4v7H8z" fill="#fff" stroke="#5b6068" /></Ico>
          </button>
          <span className="ml-2 w-[34px]">100%</span>
          <Ico s={15}><circle cx="8" cy="8" r="7" fill="#f5f6f7" stroke="#6b7077" /><path d="M4 8h8" stroke="#444" strokeWidth="1.8" /></Ico>
          <input
            type="range"
            aria-label="Масштаб"
            className="h-[14px] w-[94px] appearance-none bg-[linear-gradient(#6b7077,#6b7077)] bg-[length:100%_1px] bg-center bg-no-repeat [&::-webkit-slider-thumb]:h-3 [&::-webkit-slider-thumb]:w-[9px] [&::-webkit-slider-thumb]:appearance-none [&::-webkit-slider-thumb]:rounded-b-full [&::-webkit-slider-thumb]:border [&::-webkit-slider-thumb]:border-[#6b7077] [&::-webkit-slider-thumb]:bg-[#f5f6f7]"
          />
          <Ico s={15}><circle cx="8" cy="8" r="7" fill="#f5f6f7" stroke="#6b7077" /><path d="M4 8h8M8 4v8" stroke="#444" strokeWidth="1.8" /></Ico>
        </div>
      </footer>
      <i className="absolute bottom-0 left-[662px] h-[3px] w-[596px] rounded-t-sm bg-white" />
    </section>
  );
}

/* ---------- Smeta.RU ---------- */

function Grip() {
  return (
    <span className="flex h-full w-[10px] shrink-0 items-center gap-px pl-1">
      <i className="h-[22px] w-[3px] border border-t-white border-r-[#808080] border-b-[#808080] border-l-white" />
      <i className="h-[22px] w-[3px] border border-t-white border-r-[#808080] border-b-[#808080] border-l-white" />
    </span>
  );
}

function VSep() {
  return <i className="mx-[3px] h-[22px] w-px shrink-0 bg-[#808080]" />;
}

function TB({ label, children }: Kids & { label: string }) {
  return (
    <button aria-label={label} className="flex h-[22px] w-[23px] shrink-0 items-center justify-center">
      {children}
    </button>
  );
}

function Strip({ children }: Kids) {
  return <div className="flex h-full shrink-0 items-center border-r border-b border-r-[#808080] border-b-[#808080]">{children}</div>;
}

function Badge() {
  return <path d="M12 0v7M8.5 3.5h7M9.5 1l5 5M14.5 1l-5 5" stroke="#f08a1a" strokeWidth="1.4" />;
}

function Bricks() {
  return (
    <Ico>
      <path d="M.3 10.5h4.600v2.500H.3zM5.700 10.5h4.600v2.500H5.700zM11.100 10.5h4.600v2.500h-4.600zM2.800 7.500h4.700v2.500H2.800zM8.400 7.500h4.700v2.500H8.400zM5.600 4.500h4.700V7H5.600z" fill="#ee7a2e" stroke="#a8431a" strokeWidth=".6" />
    </Ico>
  );
}

function Truck() {
  return (
    <Ico>
      <path d="M0 5l9 1v6H0z" fill="#2f6fb8" />
      <path d="M9.500 5H14l2 3v4H9.500z" fill="#f0a52b" />
      <path d="M11 6h3l1 2h-4z" fill="#cfe8ff" />
      <circle cx="4" cy="12.5" r="2" fill="#222" />
      <circle cx="12.5" cy="12.5" r="2" fill="#222" />
    </Ico>
  );
}

function Doc() {
  return (
    <svg width="12" height="16" viewBox="0 0 12 16" aria-hidden="true">
      <path d="M3 .5h8.500v15H.5V3z" fill="#9cc6f0" stroke="#7a8796" />
      <path d="M5 3h5v7H2V6z" fill="#dcebfb" />
    </svg>
  );
}

function PlusMinus() {
  return (
    <svg width="8" height="13" viewBox="0 0 8 13" className="absolute right-[3px] bottom-1" aria-hidden="true">
      <path d="M4 0v7M.5 3.500h7" stroke="#3d9a2a" strokeWidth="2.6" />
      <path d="M.5 11h7" stroke="#e0492f" strokeWidth="2.6" />
    </svg>
  );
}

function TextIcon({ t }: { t: string }) {
  return (
    <span className="relative flex h-[15px] w-[15px] items-center justify-center border border-[#7fa3d6] bg-white pt-1 text-[8px] leading-none font-bold text-[#333]">
      {t}
      <i className="absolute -top-0.5 -left-0.5 h-[5px] w-[5px] rounded-full bg-[#f08a1a]" />
    </span>
  );
}

function ListIcon({ dir, side }: { dir: "in" | "up" | "out" | "dn"; side: number }) {
  const arrows = {
    in: "M1 3h6M4 .5v5",
    up: "M4 7V1M1.5 3.5L4 1l2.5 2.5",
    out: "M4 8v6M1.5 11.5L4 14l2.5-2.5",
    dn: "M1 12h6M4.5 9.5L7 12l-2.5 2.5",
  };
  return (
    <Ico>
      <path d={`M${side} 3h9M6 6h9M6 9h9M6 12h9`} stroke="#8a8fa0" strokeWidth="1.2" />
      <path d={arrows[dir]} stroke="#2343c0" strokeWidth="1.7" fill="none" />
    </Ico>
  );
}

function Tog({ w, on, off, children }: Kids & { w: string; on?: boolean; off?: boolean }) {
  return (
    <button
      disabled={off}
      className={`${w} ${on ? `${SUNKEN} ${DITHER}` : ""} ${off ? "text-[#9a968e] [text-shadow:1px_1px_0_#fff]" : ""} h-[23px] shrink-0 text-center whitespace-nowrap`}
    >
      {children}
    </button>
  );
}

function RedClose({ label }: { label: string }) {
  return (
    <button aria-label={label} className="flex h-[13px] w-[14px] items-center justify-center rounded-xs bg-[#e01b1b]">
      <Ico s={8} vb={8}><path d="M1 1l6 6M7 1L1 7" stroke="#fff" strokeWidth="1.9" /></Ico>
    </button>
  );
}

function Scroll({ gap, thumb, label }: { gap: string; thumb: string; label: string }) {
  return (
    <div className={`flex w-4 shrink-0 flex-col ${DITHER}`}>
      <button aria-label={`${label}: вверх`} className={`${RAISED} flex h-4 items-center justify-center`}><Up c="#000" /></button>
      <span className={gap} />
      <span className={`${RAISED} ${thumb}`} />
      <span className="flex-1" />
      <button aria-label={`${label}: вниз`} className={`${RAISED} flex h-4 items-center justify-center`}><Down c="#000" /></button>
    </div>
  );
}

function SmetaBars() {
  return (
    <>
      <header className="flex h-[19px] shrink-0 items-center gap-1 bg-linear-to-r from-[#8a8a8a] to-[#c0c0c0] pr-px pl-px font-['Noto_Sans',sans-serif] text-[12px] font-bold text-[#d4d0c8]">
        <SmetaLogo />
        <h2 className="flex-1 whitespace-pre">
          {'Smeta.RU  10.0.0.10   - [Проектная смета: 02-02 Дорожная одежда автодороги на балансе ГК "Автодор"_изм. 23.06.2017]'}
        </h2>
        <WinBtns boxed />
      </header>
      <nav className="flex h-[26px] shrink-0 items-center border-y border-t-white border-b-[#808080]">
        <Grip />
        <span className="ml-[3px]"><SmetaLogo /></span>
        <button className="ml-[6px]"><u>С</u>мета</button>
        <button className="ml-[12px]">Настройки</button>
        <i className="mx-2 h-[22px] w-px bg-[#808080]" />
        <button>Справочники</button>
        <button className="ml-[12px]">Окно</button>
        <button className="ml-[12px]">Помощь</button>
        <span className="flex-1" />
        <WinBtns boxed />
        <span className="w-0.5" />
      </nav>
      <div className="flex h-[26px] shrink-0 items-center border-t border-white">
        <Strip>
          <Grip />
          <TB label="Структура">
            <Ico>
              <path d="M1 1h7v3H1z" fill="#e8d44a" stroke="#8a7a1a" />
              <path d="M4 4v10h4M4 9h4" stroke="#444" fill="none" />
              <path d="M8 6h6v2H8zM8 9.5h6v2H8zM8 13h6v2H8z" fill="#6f9be8" stroke="#2f4f8f" strokeWidth=".7" />
            </Ico>
          </TB>
          <VSep />
          <button className="flex items-center gap-2 pr-2 pl-[3px] whitespace-nowrap">
            <Ico>
              <circle cx="10" cy="6" r="4.5" fill="#cfe4fb" stroke="#7a8fb0" strokeWidth="1.5" />
              <path d="M7 9.5L2 15" stroke="#c26a2a" strokeWidth="2.6" />
            </Ico>
            Поиск в нормативной базе
          </button>
        </Strip>
        <Strip>
          <Grip />
          <TB label="Сохранить"><Ico><path d="M1 1h14v14H1z" fill="#8a8a8a" /><path d="M4 1h8v5H4zM4 9h8v6H4z" fill="#d0cdc6" /><path d="M9 2h2v3H9z" fill="#777" /></Ico></TB>
          <TB label="Отменить"><Ico><path d="M3 5v4h4M3 9c2-5 9-4 9 2" fill="none" stroke="#8a8a8a" strokeWidth="1.8" /></Ico></TB>
          <TB label="Обновить"><Ico><path d="M13 9c0 4-4 5.5-7 4M3 7c0-4 4-5.5 7-4M3 14l3-1-1-3M13 2l-3 1 1 3" fill="none" stroke="#3d9a2a" strokeWidth="2" /></Ico></TB>
          <TB label="Excel"><ExcelLogo /></TB>
          <VSep />
          <TB label="Добавить расценку"><Ico><path d="M1 15L11 5M4 4l8 10" stroke="#555" strokeWidth="2" /><Badge /></Ico></TB>
          <TB label="Добавить материал"><Ico><path d="M1 12h4v3H1zM6 12h4v3H6zM11 12h4v3h-4zM3.5 8.5h4v3h-4zM8.5 8.5h4v3h-4z" fill="#e0692a" stroke="#a8431a" strokeWidth=".5" /><Badge /></Ico></TB>
          <TB label="Добавить оборудование"><Ico><path d="M1 5h9v4H1zM3 9h7v6H3z" fill="#4f9a5f" stroke="#2c6a3a" /><path d="M5 11h3v2H5z" fill="#e8f5e8" /><Badge /></Ico></TB>
          <TB label="Комментарий"><Ico><path d="M1 4h12v7H7l-3 4v-4H1z" fill="#fff" stroke="#7a8fa0" /><Badge /></Ico></TB>
          <VSep />
          <TB label="Удалить"><Ico><path d="M3 3l10 11M13 3L3 14" stroke="#e0392b" strokeWidth="1.8" /></Ico></TB>
          <VSep />
          <TB label="Печать"><Ico><path d="M1 5h12v7H1z" fill="#8f8f8f" /><circle cx="7" cy="8.5" r="3.5" fill="#b8b5ae" stroke="#666" /><path d="M11 10h4v3h-4z" fill="#777" /></Ico></TB>
          <TB label="Группа"><Ico><path d="M5 1h6v5H5zM1 8h6v6H1zM9 8h6v6H9z" fill="#9a9a9a" stroke="#666" /></Ico></TB>
          <button className="px-[6px] whitespace-nowrap">Изменить тип строки...</button>
          <VSep />
          <button disabled className="px-1 whitespace-nowrap text-[#9a968e] [text-shadow:1px_1px_0_#fff]">Копировать в смету</button>
          <TB label="Копировать"><Ico><path d="M1 1h8v11H1zM6 4h9v11H6z" fill="#d9f0f5" stroke="#5aa5b8" /></Ico></TB>
          <TB label="Вставить"><Ico><path d="M2 2h12v13H2z" fill="#f0b53a" stroke="#a8741a" /><path d="M5 5h9v10H5z" fill="#fff5d8" stroke="#a8741a" /><path d="M6 0h4v3H6z" fill="#888" /></Ico></TB>
          <TB label="Вставить строку"><Ico><path d="M5 1h9v13H5z" fill="#f4f4f4" stroke="#999" /><path d="M4 8v5M1.5 10.5h5" stroke="#3d9a2a" strokeWidth="1.6" /><path d="M6 14.5h6" stroke="#e0392b" strokeWidth="2" /></Ico></TB>
        </Strip>
        <Strip>
          <Grip />
          <TB label="Локальная смета"><TextIcon t="ЛС" /></TB>
          <TB label="Раздел"><TextIcon t="Р" /></TB>
          <TB label="Подраздел"><TextIcon t="ПР" /></TB>
          <TB label="Удалить из структуры">
            <Ico>
              <path d="M1 1h7v3H1z" fill="#e8d44a" stroke="#8a7a1a" />
              <path d="M4 4v10h4M4 9h4" stroke="#444" fill="none" />
              <path d="M7 8h6v2H7zM7 12h6v2H7z" fill="#6f9be8" stroke="#2f4f8f" strokeWidth=".7" />
              <path d="M10 2l5 5M15 2l-5 5" stroke="#e0392b" strokeWidth="1.5" />
            </Ico>
          </TB>
        </Strip>
        <Strip>
          <Grip />
          <TB label="Уровень вправо"><ListIcon dir="in" side={8} /></TB>
          <TB label="Строка выше"><ListIcon dir="up" side={8} /></TB>
          <TB label="Строка ниже"><ListIcon dir="out" side={6} /></TB>
          <TB label="Уровень влево"><ListIcon dir="dn" side={6} /></TB>
        </Strip>
        <Strip>
          <Grip />
          <TB label="Работы"><Ico><path d="M2 14L11 3M3 3c5-2 9 2 10 11" stroke="#555" strokeWidth="1.6" fill="none" /><path d="M9 1l4 3" stroke="#b88a3a" strokeWidth="2" /></Ico></TB>
          <TB label="Машины"><Truck /></TB>
          <TB label="Материалы"><Bricks /></TB>
          <TB label="Калькулятор"><Ico><path d="M3 0h10v16H3z" fill="#4a7f94" stroke="#2c5566" /><path d="M5 2h6v3H5z" fill="#cfe8d8" /><path d="M5 7h1.5v1.5H5zM7.5 7H9v1.5H7.5zM10 7h1.5v1.5H10zM5 10h1.5v1.5H5zM7.5 10H9v1.5H7.5zM10 10h1.5v1.5H10zM5 13h1.5v1.5H5zM7.5 13H9v1.5H7.5z" fill="#fff" /></Ico></TB>
        </Strip>
        <Strip>
          <Grip />
          <TB label="Слои"><Ico><path d="M8 8l7 3-7 4-7-4z" fill="#7fb2ea" stroke="#3a6fb0" strokeWidth=".7" /><path d="M8 4.5l7 3-7 4-7-4z" fill="#cfe4fb" stroke="#3a6fb0" strokeWidth=".7" /><path d="M8 1l7 3-7 4-7-4z" fill="#2f5fb3" /></Ico></TB>
        </Strip>
        <Strip>
          <Grip />
          <button className="flex items-center gap-2 pr-2 pl-[6px] whitespace-nowrap">
            Размер шрифта: 125% <Down c="#000" />
          </button>
        </Strip>
      </div>
      <div className="flex h-[26px] shrink-0 items-center border-t border-white">
        <Strip>
          <Grip />
          <Tog w="w-[60px]">Ресурсы</Tog>
          <Tog w="w-[78px]" on>Панель цен</Tog>
          <Tog w="w-[103px]" on>Лимит. затраты</Tog>
          <Tog w="w-[88px]">Состав работ</Tog>
          <Tog w="w-[73px]">Тех. часть</Tog>
          <Tog w="w-[60px]">Индексы</Tog>
          <Tog w="w-[66px]" on>Поправки</Tog>
          <Tog w="w-[64px]" on>Формулы</Tog>
          <Tog w="w-[68px]" on>Структура</Tog>
          <Tog w="w-[82px]" off>Оглавление</Tog>
          <button className="flex w-[155px] items-center justify-between pr-[7px] pl-1 whitespace-nowrap">
            Список открытых окон <Down c="#000" />
          </button>
        </Strip>
      </div>
      <div className="flex h-[27px] shrink-0 items-center border-y border-t-[#808080] border-b-[#808080] bg-[#eeeeee]">
        <input aria-label="Адрес" defaultValue="ЛС1.Р1" className="ml-[2px] h-[21px] w-[118px] border-2 border-black bg-white pl-px text-[12px]" />
        <span className="ml-[3px] h-full w-[67px] border-r border-[#808080] bg-[#d4d0c8]" />
        <input aria-label="Значение" defaultValue="0" className="h-full min-w-0 flex-1 bg-transparent pl-[6px] text-[13px]" />
        <span className="flex w-4 flex-col">
          <button aria-label="Больше" className={`${RAISED} flex h-[11px] items-center justify-center`}><Up c="#888" /></button>
          <button aria-label="Меньше" className={`${RAISED} flex h-[11px] items-center justify-center`}><Down c="#888" /></button>
        </span>
        <span className="flex h-full w-[24px] items-center justify-center bg-[#d4d0c8]"><RedClose label="Закрыть строку" /></span>
      </div>
    </>
  );
}

type Row = {
  k?: "brick" | "truck" | "doc";
  box?: boolean;
  tone?: string;
  c: string[];
  pm?: boolean;
  tri?: boolean;
  cur?: boolean;
  short?: boolean;
};

const PINK = "bg-[#ffe9e9]";
const SKY = "bg-[#d6eaff]";

const ESTIMATE: Row[] = [
  { k: "brick", tone: PINK, c: ["5,3", "01.7.03.01-0001", "Вода", "м3", "4 680", "10,349151", "-", "11 419,2", "2,44"] },
  { k: "brick", tone: PINK, c: ["5,4", "01.2.03.07-0021", "Эмульсия битумная", "т", "4 680", "10,349151", "-", "12 744 576", "2 723,2"] },
  { k: "truck", box: true, tone: SKY, pm: true, tri: true, c: ["6", "91.08.02-001\nтех часть", "Доставка к месту работ битума, битумной эмульсии до 230 км", "100 т", "46,8", "", "29 278,08", "29 278,08", "625,6"] },
  { k: "doc", c: [] },
  { box: true, tri: true, c: ["7", "01-01-013-08", "Разработка грунта с погрузкой на автомобили-самосвалы экскаваторами с ковшом вместимостью 0,65 (0,5-1) м3, группа грунтов 2", "1000 м3", "5,349", "", "23 538,89", "19 383,81", "3 623,82"] },
  { box: true, tri: true, c: ["8", "т03-21-01-006", "Перевозка грузов I класса автомобилями-самосвалами грузоподъемностью 10 т работающих вне карьера на расстояние до 6 км", "1 Т ГРУЗА", "12 837,6", "", "98 079,26", "98 079,26", "7,64"] },
  { k: "doc", c: [] },
  { box: true, pm: true, c: ["9", "27-06-026-01\nПоправка:", "Розлив вяжущих материалов", "т", "158,6", "", "253 677,94", "7 441,51", "46,92"] },
  { k: "brick", tone: PINK, c: ["9,1", "01.2.01.01-0001", "Битумы нефтяные дорожные жидкие, класс МГ, СГ", "т", "163,358", "1,03", "-", "243 011,36", "1 487,6"] },
  { k: "truck", box: true, tone: SKY, pm: true, tri: true, c: ["10", "91.08.02-001\nтех часть", "Доставка к месту работ битума, битумной эмульсии до 230 км", "100 т", "1,63358", "", "10 219,68", "10 219,68", "625,6"] },
  { k: "doc", cur: true, c: [] },
  { short: true, c: [] },
  { tone: "bg-[#ffffdf]", c: ["", "", "Итоги по элементу структуры", "", "", "", "162 566 323,13", "159 410 898,01", ""] },
];

const HEAD_BASE = "border-r border-b border-[#808080] px-[3px] py-0 text-left overflow-hidden whitespace-nowrap shadow-[inset_1px_1px_0_#fff]";
const HEAD = `${HEAD_BASE} bg-[#d4d0c8] font-normal`;
const HEAD_BOLD = `${HEAD_BASE} bg-[#d4d0c8] font-bold`;
const HEAD_GREEN = `${HEAD_BASE} bg-[#bfdcbf] font-normal`;
const HEAD_ORANGE = `${HEAD_BASE} bg-[#f0c8a4] font-normal`;

function EstimateTable() {
  return (
    <table className="w-full table-fixed border-separate border-spacing-0 bg-white text-[14px] leading-[16px]">
      <colgroup>
        <col className="w-[12px]" /><col className="w-[18px]" /><col className="w-[18px]" /><col className="w-[38px]" />
        <col className="w-[97px]" /><col /><col className="w-[49px]" /><col className="w-[89px]" />
        <col className="w-[89px]" /><col className="w-[96px]" /><col className="w-[92px]" /><col className="w-[82px]" />
      </colgroup>
      <thead>
        <tr>
          <th rowSpan={2} className={HEAD} />
          <th rowSpan={2} className={HEAD}>Тип</th>
          <th rowSpan={2} className={HEAD}>Ут</th>
          <th rowSpan={2} className={HEAD_BOLD}>№<br />п.п.</th>
          <th rowSpan={2} className={HEAD}>Обоснование</th>
          <th rowSpan={2} className={HEAD}>Наименование</th>
          <th rowSpan={2} className={HEAD}>Ед.изм<br />(полная)</th>
          <th colSpan={2} className={`${HEAD} h-[20px]`}>Количество</th>
          <th colSpan={3} className={`${HEAD} h-[20px]`}>Уровень цен</th>
        </tr>
        <tr>
          <th className={`${HEAD} h-[21px]`}>Всего</th>
          <th className={HEAD}>На единицу</th>
          <th className={HEAD_GREEN}>Всего</th>
          <th className={HEAD_GREEN}>ПЗ</th>
          <th className={HEAD_ORANGE}>ПЗ</th>
        </tr>
      </thead>
      <tbody>
        {ESTIMATE.map((r, i) => {
          const h = r.short ? "h-[17px]" : "h-[35px]";
          const base = "border-r border-b border-[#c0c0c0] px-[3px] pb-0 pt-px align-top";
          const td = `${r.tone ?? "bg-white"} ${base}`;
          const num = `${td} text-[13px] whitespace-nowrap`;
          return (
            <tr key={i}>
              <th className={`${h} border-r border-b border-[#808080] bg-[#d4d0c8] p-0 text-center shadow-[inset_1px_1px_0_#fff]`}>
                {r.cur ? <svg width="7" height="10" viewBox="0 0 7 10" className="mx-auto" aria-hidden="true"><path d="M0 0l7 5-7 5z" /></svg> : null}
              </th>
              <td className={`${r.tone ?? "bg-white"} border-r border-b border-[#a0a0a0] p-0 align-middle`}>
                {r.k === "brick" ? <Bricks /> : r.k === "truck" ? <Truck /> : r.k === "doc" ? <Doc /> : null}
              </td>
              <td className={`${r.tone ?? "bg-white"} border-r border-b border-[#c0c0c0] px-[2px] py-0 align-middle`}>
                {r.box ? <input type="checkbox" aria-label={`Строка ${r.c[0]}`} className="block h-[12px] w-[12px] appearance-none border border-[#707070] bg-white" /> : null}
              </td>
              <td className={num}>{r.c[0]}</td>
              <td className={`${td} relative overflow-hidden text-[12px] whitespace-pre`}>
                {r.c[1]}
                {r.pm ? <PlusMinus /> : null}
              </td>
              <td className={td}>{r.c[2]}</td>
              <td className={`${td} overflow-hidden text-[13px]`}>{r.c[3]}</td>
              <td className={`${r.cur ? "bg-[#0a246a]" : r.tone ?? "bg-white"} ${base} text-[13px] whitespace-nowrap ${r.tri ? "bg-[linear-gradient(225deg,#12a812_5px,transparent_5px)]" : ""}`}>
                {r.c[4]}
              </td>
              <td className={num}>{r.c[5]}</td>
              <td className={`${num} ${r.c[6] === "-" ? "text-center" : "text-right"}`}>{r.c[6]}</td>
              <td className={`${num} text-right`}>{r.c[7]}</td>
              <td className={`${num} text-right`}>{r.c[8]}</td>
            </tr>
          );
        })}
      </tbody>
    </table>
  );
}

function Check({ children, label }: Kids & { label?: string }) {
  return (
    <label className="relative flex shrink-0 items-center gap-[6px] text-[13px] whitespace-nowrap text-[#8a867e] [text-shadow:1px_1px_0_#fff]">
      <input type="checkbox" defaultChecked disabled aria-label={label} className={`${SUNKEN} h-[13px] w-[13px] appearance-none`} />
      <svg width="9" height="9" viewBox="0 0 9 9" className="absolute left-0.5" aria-hidden="true">
        <path d="M1 4l2.5 3L8 1" stroke="#808080" strokeWidth="2" fill="none" />
      </svg>
      {children}
    </label>
  );
}

function DimBtn({ w, children }: Kids & { w: string }) {
  return (
    <button disabled className={`${RAISED} ${w} h-[21px] shrink-0 text-center text-[13px] text-[#8a867e] [text-shadow:1px_1px_0_#fff]`}>
      {children}
    </button>
  );
}

function TopTab({ w, on, children }: Kids & { w: string; on?: boolean }) {
  return (
    <button
      className={`${w} ${on ? "z-10 -mb-px h-[24px]" : "h-[21px]"} relative shrink-0 overflow-hidden rounded-t-xs border border-b-0 border-t-white border-r-[#404040] border-l-white bg-[#d4d0c8] text-center text-[13px] whitespace-nowrap`}
    >
      {children}
    </button>
  );
}

function Dock() {
  return (
    <aside className="mb-0.5 ml-[5px] flex w-[498px] shrink-0 flex-col">
      <div className="flex h-[11px] items-center gap-1">
        <span className="flex flex-1 flex-col gap-px">
          <i className="h-[3px] border border-t-white border-r-[#808080] border-b-[#808080] border-l-white" />
          <i className="h-[3px] border border-t-white border-r-[#808080] border-b-[#808080] border-l-white" />
        </span>
        <button aria-label="Закрыть панель" className={`${RAISED} mr-1 flex h-[10px] w-[10px] items-center justify-center`}>
          <Ico s={6} vb={6}><path d="M.5.5l5 5M5.5.5l-5 5" stroke="#000" /></Ico>
        </button>
      </div>
      <div className="flex h-[21px] items-end pl-0.5">
        <TopTab w="w-[86px]">Панель цен</TopTab>
        <TopTab w="w-[80px]" on>Поправки</TopTab>
        <TopTab w="w-[133px]">Сметные формулы</TopTab>
        <TopTab w="w-[140px]">Структура объекта</TopTab>
      </div>
      <div className="flex min-h-0 flex-1 flex-col border border-t-white border-r-[#808080] border-b-[#404040] border-l-white px-[3px]">
        <div className="flex items-center gap-1 pt-[7px] pl-[3px]">
          <DimBtn w="w-[80px]">Очистить</DimBtn>
          <DimBtn w="w-[90px]">Справочник</DimBtn>
          <Check>Добавление</Check>
        </div>
        <div className="mt-[5px] flex items-center justify-end gap-[5px] pr-[9px]">
          <Down c="#808080" />
          <span className="w-1" />
          <DimBtn w="w-[80px]">Добавить</DimBtn>
          <Check label="Добавить сразу" />
        </div>
        <div className={`${SUNKEN} mt-1 flex-1`} />
        <div className="h-1 shrink-0 bg-[#808080]" />
        <textarea aria-label="Примечание к поправке" disabled className={`${SUNKEN} mx-[3px] mt-[6px] h-[42px] shrink-0 resize-none`} />
        <div className="mt-[5px] pl-1"><Check>Показывать в обосновании</Check></div>
        <div className={`mt-[8px] flex h-[24px] shrink-0 items-start border-t-2 border-black pl-[10px] text-[13px] leading-[18px] ${DITHER}`}>
          <button className="w-[90px] rounded-b-sm border border-t-0 border-[#404040] bg-[#d4d0c8] text-center">Примечание</button>
          <button className="w-[76px] rounded-b-sm border border-t-0 border-[#404040] bg-white text-center">Поправка</button>
        </div>
        <div className="mt-1 pl-[7px]"><Check>Заменять назначенные</Check></div>
        <div className="mt-0.5 mb-[6px] flex h-[25px] shrink-0 gap-2 px-[6px]">
          <button disabled className={`${RAISED} flex-1 text-[13px] text-[#8a867e] [text-shadow:1px_1px_0_#fff]`}>Применить</button>
          <button disabled className={`${RAISED} flex-1 text-[13px] text-[#8a867e] [text-shadow:1px_1px_0_#fff]`}>Отменить</button>
        </div>
      </div>
    </aside>
  );
}

function BottomTab({ w, on, children }: Kids & { w: string; on?: boolean }) {
  return (
    <button
      className={`${w} ${on ? "h-[23px]" : "h-[21px]"} mr-px shrink-0 overflow-hidden rounded-b-xs border border-t-0 border-r-[#404040] border-b-[#404040] border-l-white text-center text-[13px] whitespace-nowrap`}
    >
      {children}
    </button>
  );
}

const LIMITS: [string, string, string, string, string][] = [
  ["1", "ПЗ", "Прямые затраты", "159 410 898,01", "ПЗ"],
  ["2", "СтМатОб", "Стоимость материальных ресурсов (всего)", "132 327 110,64", "СтМатОб"],
  ["3", "СтМатОбЗак", "Стоимость материалов и оборудования заказчика", "0,00", "СтМатОбЗак"],
  ["4", "СтМатОбПод", "Стоимость материалов и оборудования подрядчика", "132 327 110,64", "СтМатОбПод"],
  ["5", "СтМат", "Стоимость материалов (всего)", "132 327 110,64", "СтМат"],
  ["6", "СтМатЗак", "Стоимость материалов заказчика", "0,00", "СтМатЗак"],
  ["7", "СтМатПод", "Стоимость материалов подрядчика", "132 327 110,64", "СтМатПод"],
  ["8", "Оборуд", "Стоимость оборудования (всего)", "0,00", "Оборуд"],
  ["9", "ОборудЗак", "Стоимость оборудования заказчика", "0,00", "ОборудЗак"],
  ["10", "ОборудПод", "Стоимость оборудования подрядчика", "0,00", "ОборудПод"],
  ["11", "ЭММ", "Эксплуатация машин", "26 440 570,73", "ЭММ"],
  ["13", "ЗПМ", "ЗП машинистов", "689 298,74", "ЗПМ"],
];

function LimitTable() {
  const td = "h-[19px] overflow-hidden whitespace-nowrap border-r border-b border-[#c0c0c0] px-[3px] py-0";
  const gut = "border-r border-b border-[#808080] bg-[#d4d0c8] p-0 shadow-[inset_1px_1px_0_#fff]";
  return (
    <table className="w-[828px] shrink-0 table-fixed border-separate border-spacing-0 text-[14px] leading-[16px]">
      <colgroup>
        <col className="w-[12px]" /><col className="w-[36px]" /><col className="w-[71px]" /><col className="w-[271px]" />
        <col className="w-[103px]" /><col className="w-[61px]" /><col className="w-[96px]" /><col className="w-[76px]" /><col className="w-[102px]" />
      </colgroup>
      <thead>
        <tr>
          <th rowSpan={2} className={HEAD} />
          <th rowSpan={2} className={`${HEAD} text-[13px]`}>№п/п</th>
          <th rowSpan={2} className={HEAD}>Переменная</th>
          <th rowSpan={2} className={HEAD}>Наименование</th>
          <th className={`${HEAD} h-[37px]`}>Стандартные<br />итоги</th>
          <th rowSpan={2} className={HEAD}>Тип</th>
          <th rowSpan={2} className={HEAD_BOLD}>Точность</th>
          <th rowSpan={2} className={HEAD_BOLD}>Печать</th>
          <th rowSpan={2} className={HEAD}>Примечание</th>
        </tr>
        <tr><th className={`${HEAD} h-[21px]`}>Уровень цен</th></tr>
      </thead>
      <tbody>
        <tr className="bg-[#ececff] text-[#2a2ac0]">
          <th className={gut}><svg width="7" height="10" viewBox="0 0 7 10" className="mx-auto" aria-hidden="true"><path d="M0 0l7 5-7 5z" fill="#000" /></svg></th>
          <td className={`${td} text-[13px]`}>ЛС1.Р1</td>
          <td className={td}>
            <span className="flex justify-end">
              <Ico><path d="M7 1h8v14H7z" fill="#fbf3b8" stroke="#c2b45a" /><path d="M1 3h9v12H1z" fill="#b8f0c0" stroke="#3d9a4a" /><path d="M4 13V6h2.5c2 0 2 3.500 0 3.500H4" stroke="#222" fill="none" /></Ico>
            </span>
          </td>
          <td className={`${td} font-bold`}><span className="pl-[15px]">Дорожная одежда на усилении</span></td>
          <td className={`${td} bg-[#808080]`} />
          <td className={td} /><td className={td} /><td className={td} /><td className={td} />
        </tr>
        {LIMITS.map(([n, v, name, sum, t]) => (
          <tr key={n} className="bg-white">
            <th className={gut} />
            <td className={`${td} text-[13px]`}>{n}</td>
            <td className={`${td} text-[13px]`}>{v}</td>
            <td className={td}>{name}</td>
            <td className={`${td} text-right text-[13px]`}>{sum}</td>
            <td className={`${td} text-[13px]`}>{t}</td>
            <td className={td}>До 2 знаков</td>
            <td className={td}>Нет</td>
            <td className={td} />
          </tr>
        ))}
      </tbody>
    </table>
  );
}

function Limits() {
  return (
    <div className="flex shrink-0 border-t border-white pt-[3px]">
      <div className="flex w-[13px] flex-col items-center">
        <button aria-label="Закрыть панель затрат" className={`${RAISED} flex h-[10px] w-[10px] items-center justify-center`}>
          <Ico s={6} vb={6}><path d="M.5.5l5 5M5.5.5l-5 5" stroke="#000" /></Ico>
        </button>
        <span className="mt-0.5 flex flex-1 gap-px">
          <i className="w-[3px] border border-t-white border-r-[#808080] border-b-[#808080] border-l-white" />
          <i className="w-[3px] border border-t-white border-r-[#808080] border-b-[#808080] border-l-white" />
        </span>
      </div>
      <div className="flex min-w-0 flex-1 flex-col pr-0.5">
        <div className="flex h-[22px] items-end pl-0.5">
          <TopTab w="w-[161px]">Нормативные ресурсы</TopTab>
          <TopTab w="w-[126px]">Сметные ресурсы</TopTab>
          <TopTab w="w-[187px]" on>Лимитированные затраты</TopTab>
        </div>
        <div className="flex border border-t-white border-r-[#404040] border-b-[#404040] border-l-white p-[3px]">
          <div className="flex w-[27px] flex-col items-center text-[13px]">
            <i className="mt-0.5 h-[3px] w-[21px] border border-t-white border-r-[#808080] border-b-[#808080] border-l-white" />
            <button aria-label="Добавить" className="flex h-[26px] w-full items-center justify-center border-b border-[#808080]">
              <Ico s={14} vb={14}><path d="M7 1v12M1 7h12" stroke="#3d9a2a" strokeWidth="3.6" /></Ico>
            </button>
            <button aria-label="Удалить" className="flex h-[27px] w-full items-center justify-center border-b border-[#808080]">
              <Ico s={12} vb={12}><path d="M1.5 1l9 10M10.5 1l-9 10" stroke="#e0492f" strokeWidth="2" /></Ico>
            </button>
            <button className={`${SUNKEN} ${DITHER} mt-[10px] h-[22px] w-[23px]`}>Ст</button>
            <button className="mt-[6px] h-[22px]">ТР</button>
            <button className="mt-[6px] h-[22px]">ВР</button>
          </div>
          <div className="flex min-w-0 flex-1 border-t border-l border-[#808080] bg-white">
            <div className="min-w-0 flex-1 overflow-hidden pb-2"><LimitTable /></div>
            <Scroll label="Затраты" gap="h-[17px]" thumb="h-[9px]" />
          </div>
        </div>
      </div>
    </div>
  );
}

function TaskBtn({ icon, children }: Kids & { icon: React.ReactNode }) {
  return (
    <button className={`${RAISED} flex h-[22px] w-[159px] shrink-0 items-center gap-[5px] overflow-hidden pl-[3px] whitespace-nowrap`}>
      {icon}
      <span className="whitespace-pre">{children}</span>
    </button>
  );
}

function Smeta() {
  return (
    <section className="relative flex min-w-0 flex-1 flex-col overflow-hidden bg-[#d4d0c8] font-['Liberation_Sans',sans-serif] text-[13px] leading-[16px] text-black">
      <SmetaBars />
      <div className="h-[7px] shrink-0 border-y border-t-white border-b-white" />

      <div className="flex min-h-0 flex-1">
        <div className="flex min-w-0 flex-1 flex-col border-r-2 border-[#808080]">
          <div className="flex min-h-0 flex-1 flex-col border-b-2 border-[#404040] pr-[5px] pl-[5px]">
            <div className="flex h-[31px] shrink-0 items-center border-t border-[#808080]">
              <TB label="Отметить все"><Ico><path d="M1 1h5v5H1zM1 9h5v5H1z" fill="#fff" stroke="#333" /><path d="M2 11l1.5 2L6 10M9 2h6M9 4.5h6M9 10h6M9 13h6" stroke="#2f9a3a" strokeWidth="1.4" fill="none" /></Ico></TB>
              <TB label="Снять отметки"><Ico><path d="M1 1h5v5H1zM1 9h5v5H1z" fill="#fff" stroke="#555" /><path d="M9 2h6M9 4.5h6M9 10h6M9 13h6" stroke="#999" strokeWidth="1.4" /></Ico></TB>
              <VSep />
              <TB label="Вверх"><Ico><rect x="1" y="1" width="14" height="14" rx="1" fill="#8a8a8a" /><path d="M8 4v9M4.5 7.5L8 4l3.5 3.5" stroke="#e5e3de" strokeWidth="2" fill="none" /></Ico></TB>
              <TB label="Вниз"><Ico><rect x="1" y="1" width="14" height="14" rx="1" fill="#8a8a8a" /><path d="M8 3v9M4.5 8.5L8 12l3.5-3.5" stroke="#e5e3de" strokeWidth="2" fill="none" /></Ico></TB>
              <VSep />
              <button className="flex items-center gap-2 pl-[8px] text-[14px]">
                <Ico><path d="M2 1h9l3 3v11H2z" fill="#f2f2f2" stroke="#aaa" /><path d="M4 5h7M4 8h7M4 11h7" stroke="#999" /></Ico>
                Критерии не заданы
              </button>
              <span className="flex-1" />
              <span className="mb-1"><RedClose label="Закрыть фильтр" /></span>
            </div>
            <div className="flex min-h-0 flex-1 border-t border-l border-[#808080] bg-white">
              <div className="min-w-0 flex-1 overflow-hidden pr-1"><EstimateTable /></div>
              <Scroll label="Смета" gap="h-[215px]" thumb="h-4" />
            </div>
          </div>
          <div className="flex h-[24px] shrink-0 items-start pl-[3px]">
            <BottomTab w="w-[87px]">Полный вид</BottomTab>
            <BottomTab w="w-[134px]" on>Сокращенный вид</BottomTab>
            <BottomTab w="w-[82px]">Вид строки</BottomTab>
            <BottomTab w="w-[125px]">Объектная смета</BottomTab>
            <BottomTab w="w-[107px]">Предпросмотр</BottomTab>
          </div>
        </div>
        <Dock />
      </div>
      <div className="h-px shrink-0 bg-[#808080]" />

      <Limits />

      <div className="mt-0.5 flex h-[34px] shrink-0 gap-[3px] border-t border-white pt-px pr-[3px] pb-[3px] pl-[3px]">
        <span className={`${SUNKEN} w-[86px]`} />
        <span className={`${SUNKEN} w-[347px]`} />
        <span className={`${SUNKEN} flex flex-1 items-center pl-1`}>Итого: по смете Уровень цен: 263 981 176,74 руб.</span>
        <span className={`${SUNKEN} flex w-[31px] items-center justify-center`}>
          <Ico s={18} vb={18}>
            <circle cx="9" cy="9" r="7.5" fill="#8f8f8f" />
            <path d="M9 4v2M9 8v6" stroke="#e5e3de" strokeWidth="2" />
            <path d="M1 1l16 16" stroke="#e01b1b" strokeWidth="2.2" />
          </Ico>
        </span>
        <span className={`${SUNKEN} flex w-[31px] items-center justify-center text-[12px]`}>RU</span>
      </div>

      <footer className="flex h-[28px] shrink-0 items-center border-t border-white pl-0.5 text-[11px]">
        <button className={`${RAISED} flex h-[22px] w-[51px] items-center pl-0.5 font-bold`}>
          <Ico>
            <path d="M2 3c2-1 4-1 5.5 0v5C6 7 4 7 1.5 8z" fill="#e8543f" />
            <path d="M8.5 3.5c2 1 4 1 6 0L14 8c-2 1-4 1-5.5.3z" fill="#5fb53a" />
            <path d="M1.5 9C4 8 6 8 7.5 9l-.5 5C5 13 3 13 1 14z" fill="#3f7bd0" />
            <path d="M8.5 9.5c2 1 4 1 5.5 0l-.5 5c-2 1-4 1-5.5 0z" fill="#f5c431" />
          </Ico>
          Пуск
        </button>
        <div className="ml-[9px] flex gap-[3px]">
          <TaskBtn icon={<Ico><path d="M1 3l5-2v14l-5-2z" fill="#e8c45a" /><path d="M6 1h7v14H6z" fill="#f7e08a" stroke="#c29b29" strokeWidth=".6" /></Ico>}>шаги изменений</TaskBtn>
          <TaskBtn icon={<SmetaLogo />}>{"Smeta.RU  10.0.0.10"}</TaskBtn>
          <TaskBtn icon={<SmetaLogo />}>{"Smeta.RU  10.0.0.10"}</TaskBtn>
          <TaskBtn icon={<WordLogo />}>Справка по замечаниям...</TaskBtn>
          <TaskBtn icon={<WordLogo />}>02-02 дорожная одежд...</TaskBtn>
          <TaskBtn icon={<ExcelLogo />}>{"Main.xls  [Только для ч..."}</TaskBtn>
          <TaskBtn icon={<ExcelLogo />}>02-02 Дорожная одежд...</TaskBtn>
        </div>
        <span className="flex-1" />
        <span className="pr-1 text-[12px]">RU</span>
        <i className="mx-px h-[22px] w-px bg-[#808080]" />
        <div className={`${SUNKEN} mr-0.5 flex h-[23px] w-[156px] items-center gap-2 pl-[6px]`}>
          <Ico s={7} vb={7}><path d="M1 3l2.5-2.5L6 3M1 6.5L3.5 4 6 6.5" stroke="#000" fill="none" /></Ico>
          <Ico><path d="M2 1v14" stroke="#666" strokeWidth="1.5" /><path d="M3 2h9v6H3z" fill="#fff" stroke="#777" /><circle cx="11" cy="11" r="4.5" fill="#e01b1b" /><path d="M9 9l4 4M13 9l-4 4" stroke="#fff" strokeWidth="1.5" /></Ico>
          <Ico><path d="M3 4h12v9H3z" fill="#d8dde5" stroke="#555" /><path d="M1 1v7h3V1" fill="#ddd" stroke="#555" /><path d="M7 7l7 8M14 7l-7 8" stroke="#e01b1b" strokeWidth="2.2" /></Ico>
          <Ico><path d="M1 6h3l4-4v12l-4-4H1z" fill="#f2f2f2" stroke="#777" /><path d="M10 5c1.5 2 1.5 4 0 6M12 3c3 3 3 7 0 10" stroke="#888" fill="none" /></Ico>
          <time className="flex-1 text-center">15:13</time>
          <Ico><path d="M0 1h16v13H0z" fill="#2a5fae" /><path d="M1 2h14v6L1 12z" fill="#5b9ae8" /><path d="M0 12h7v3H0z" fill="#bcd6f5" /></Ico>
        </div>
      </footer>
      <i className="absolute bottom-0 left-[666px] h-[3px] w-[592px] rounded-t-sm bg-white" />
    </section>
  );
}

export default function App() {
  return (
    <main className="relative flex h-screen w-full overflow-hidden">
      <Excel />
      <Smeta />
      <svg viewBox="0 0 3840 1080" preserveAspectRatio="none" className="pointer-events-none absolute inset-0 h-full w-full" aria-hidden="true">
        <g stroke="#000" strokeWidth="3" fill="none">
          <path d="M992 720L3164 291" />
          <path d="M1007 710L992 720L1009 726" />
          <path d="M3145 286L3164 291L3149 302" />
          <path d="M999 841L3166 543" />
          <path d="M1016 831L999 841L1016 846" />
          <path d="M3148 537L3166 543L3151 553" />
        </g>
      </svg>
    </main>
  );
}
